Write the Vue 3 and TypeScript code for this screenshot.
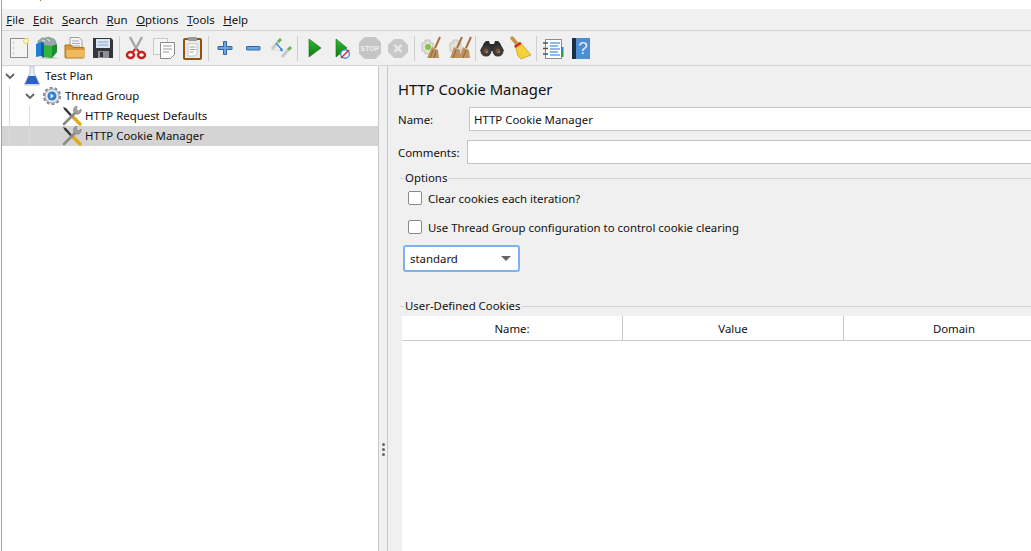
<template>
  <div class="app">
    <div class="titlebar"><span class="title-clip"></span></div>

    <nav class="menubar">
      <span v-for="m in menus" :key="m" class="menu"><u>{{ m[0] }}</u>{{ m.slice(1) }}</span>
    </nav>

    <div class="toolbar">
      <!-- new -->
      <svg class="tool" viewBox="0 0 28 24">
        <rect x="5.500" y="2.500" width="17" height="19" fill="#f3f3f1" stroke="#8f8f8f" />
        <circle cx="21" cy="5" r="2.500" fill="#fff8b0" stroke="#e8d96a" />
        <path d="M8 7h1M8 12h1M8 17h1" stroke="#999" />
      </svg>
      <!-- templates -->
      <svg class="tool" viewBox="0 0 28 24">
        <path d="M5 5l4-3h4l2-1 6 2 2 3v7H5z" fill="#9aa6ad" stroke="#75828a" stroke-width=".6" />
        <path d="M9 4l3 1M14 3l3 2" stroke="#e4e8ea" />
        <path d="M3 8l5-2v14l-5 1z" fill="#1f7fd0" />
        <path d="M8 6l3 1v15l-3-2z" fill="#0f5ea8" />
        <path d="M11 9l8 1v12l-8-1z" fill="#2fb53a" />
        <path d="M19 10l5-2v8l-5 6z" fill="#1d8a2b" />
        <ellipse cx="16" cy="22" rx="9" ry="1" fill="#000" opacity=".15" />
      </svg>
      <!-- open -->
      <svg class="tool" viewBox="0 0 28 24">
        <path d="M9 1.500h9l3 3v10H9z" fill="#f4f4f4" stroke="#a0a0a0" />
        <path d="M11 5h7M11 7.500h8M11 10h8" stroke="#aaa" />
        <path d="M4 9h6l2 2.500h11v9.500a1 1 0 0 1-1 1H5a1 1 0 0 1-1-1z" fill="#d99a33" stroke="#a8761f" />
        <path d="M5 14h19l-1 7.500H6z" fill="#eeba5f" />
      </svg>
      <!-- save -->
      <svg class="tool" viewBox="0 0 28 24">
        <path d="M4 2h18l2 2v18H4z" fill="#33363a" />
        <rect x="7" y="3" width="14" height="9" fill="#dbe6f2" />
        <path d="M9 6h10M9 9h10" stroke="#86a7cc" />
        <rect x="9" y="15" width="11" height="7" fill="#8d9094" />
        <rect x="11" y="16" width="3" height="5" fill="#33363a" />
      </svg>
      <span class="sep"></span>
      <!-- cut -->
      <svg class="tool" viewBox="0 0 28 24">
        <path d="M8 1l7 13M20 1l-7 13" stroke="#a8a8a8" stroke-width="2.500" fill="none" />
        <ellipse cx="8.500" cy="19" rx="3.500" ry="3" fill="#fff" stroke="#c8201c" stroke-width="2.400" />
        <ellipse cx="19.500" cy="19" rx="3.500" ry="3" fill="#fff" stroke="#c8201c" stroke-width="2.400" />
        <path d="M11 16l2-3M17 16l-2-3" stroke="#c8201c" stroke-width="2" />
      </svg>
      <!-- copy -->
      <svg class="tool" viewBox="0 0 28 24">
        <rect x="3.500" y="2.500" width="14" height="16" fill="#f4f4f4" stroke="#c9c9c9" />
        <path d="M10.500 6.500h14v12l-4 4h-10z" fill="#fff" stroke="#8a8a8a" />
        <path d="M13 10h9M13 13h9M13 16h6" stroke="#999" />
      </svg>
      <!-- paste -->
      <svg class="tool" viewBox="0 0 28 24">
        <rect x="6" y="3" width="17" height="20" rx="1" fill="#e9e9e6" stroke="#8f5412" stroke-width="2" />
        <rect x="10" y="1" width="9" height="4" rx="1" fill="#9a9a9a" />
        <path d="M10 8h9v10l-3 2h-6z" fill="#fff" stroke="#aaa" stroke-width=".6" />
        <path d="M11.500 11h6M11.500 13.500h6M11.500 16h4" stroke="#999" />
      </svg>
      <span class="sep"></span>
      <!-- expand -->
      <svg class="tool" viewBox="0 0 28 24">
        <path d="M12.500 5.500h3v5h5.500v3h-5.500v5h-3v-5h-5.500v-3h5.500z" fill="#6da3d8" stroke="#2a68ab" />
      </svg>
      <!-- collapse -->
      <svg class="tool" viewBox="0 0 28 24">
        <rect x="7.500" y="10.500" width="13.500" height="3.500" rx=".5" fill="#6da3d8" stroke="#2a68ab" />
      </svg>
      <!-- toggle -->
      <svg class="tool" viewBox="0 0 28 24">
        <path d="M5 13l6-7" stroke="#c9c9c9" stroke-width="3" />
        <path d="M11 6l3-3" stroke="#6fb05c" stroke-width="3" />
        <path d="M15 21l6-7" stroke="#c9c9c9" stroke-width="3" />
        <path d="M21 14l3-3" stroke="#6fb05c" stroke-width="3" />
        <path d="M4 14h7" stroke="#d5d5d5" />
        <path d="M9 7l6 7" stroke="#2f86dc" stroke-width="1.200" />
        <path d="M16 15.500l-3.500-1 2.500-2.500z" fill="#2f86dc" />
      </svg>
      <span class="sep"></span>
      <!-- start -->
      <svg class="tool" viewBox="0 0 28 24">
        <defs>
          <linearGradient id="run" x1="0" y1="0" x2="0" y2="1">
            <stop offset="0" stop-color="#35b935" />
            <stop offset="1" stop-color="#0a7d0a" />
          </linearGradient>
        </defs>
        <path d="M9 3l12 9-12 9z" fill="url(#run)" stroke="#0a6e0a" stroke-width=".6" />
      </svg>
      <!-- start no pauses -->
      <svg class="tool" viewBox="0 0 28 24">
        <path d="M8 3l11 9-11 9z" fill="url(#run)" stroke="#0a6e0a" stroke-width=".6" />
        <circle cx="17" cy="18" r="4.300" fill="#fff" stroke="#3d8fdc" stroke-width="1.400" />
        <path d="M13 22l8-8" stroke="#e0242a" stroke-width="1.400" />
      </svg>
      <!-- stop -->
      <svg class="tool" viewBox="0 0 28 24">
        <path d="M8.500 1h11L25 6.500v11L19.500 23h-11L3 17.500v-11z" fill="#c5c5c5" />
        <text x="14" y="15" class="stop-text">STOP</text>
      </svg>
      <!-- shutdown -->
      <svg class="tool" viewBox="0 0 28 24">
        <path d="M10 3h8l6 6v7l-6 6h-8l-6-6V9z" fill="#c8c8c8" />
        <path d="M10.500 9l7 7M17.500 9l-7 7" stroke="#e9e9e9" stroke-width="2.400" />
      </svg>
      <span class="sep"></span>
      <!-- clear -->
      <svg class="tool" viewBox="0 0 28 24">
        <path d="M5 7h3V4h5v3h3v8h-3v3H8v-3H5z" fill="#e2e2dc" stroke="#c2c2ba" />
        <circle cx="11" cy="11" r="3" fill="#86c440" />
        <path d="M23 1l-5 11" stroke="#a5703a" stroke-width="2" />
        <path d="M15 11l6 3 1 8H10z" fill="#bf9361" />
        <path d="M16 14l-3 8M19 15l-2 7" stroke="#8f6636" />
      </svg>
      <!-- clear all -->
      <svg class="tool" viewBox="0 0 28 24">
        <path d="M5 7h3V4h5v3h3v8h-3v3H8v-3H5z" fill="#e2e2dc" stroke="#c2c2ba" />
        <path d="M17 1l-5 11M26 1l-5 11" stroke="#a5703a" stroke-width="2" />
        <path d="M9 11l6 3 1 8H5z" fill="#bf9361" />
        <path d="M18 11l6 3 1 8H14z" fill="#bf9361" />
        <path d="M11 14l-3 8M21 14l-3 8" stroke="#8f6636" />
      </svg>
      <span class="sep"></span>
      <!-- search -->
      <svg class="tool" viewBox="0 0 28 24">
        <path d="M6 7l2-2h3l1 3h4l1-3h3l2 2 4 8H2z" fill="#2d2d2d" />
        <circle cx="8" cy="15" r="5.500" fill="#3a3a3a" />
        <circle cx="20" cy="15" r="5.500" fill="#3a3a3a" />
        <circle cx="8" cy="15" r="2.500" fill="#6e5444" />
        <circle cx="20" cy="15" r="2.500" fill="#6e5444" />
        <circle cx="9" cy="16" r="1" fill="#c9813f" />
        <circle cx="21" cy="16" r="1" fill="#c9813f" />
      </svg>
      <!-- reset search -->
      <svg class="tool" viewBox="0 0 28 24">
        <path d="M6 2l6 7" stroke="#c9913f" stroke-width="3.500" stroke-linecap="round" />
        <path d="M9 9l5-3 11 13-10 4-3-3z" fill="#f3d33b" stroke="#c8a420" stroke-width=".8" />
        <path d="M8 10l6-4 1.500 2-6 4z" fill="#d9242a" />
      </svg>
      <span class="sep"></span>
      <!-- function helper -->
      <svg class="tool" viewBox="0 0 28 24">
        <rect x="6.500" y="3.500" width="16" height="19" fill="#fff" stroke="#8d8d8d" />
        <path d="M4 7h5M4 12.500h5M4 18h5" stroke="#555" stroke-width="1.500" />
        <path d="M11 7h10M11 10h8M11 13h10M11 16h8M11 19h10" stroke="#1f75d6" stroke-width="1.200" />
        <rect x="22" y="11" width="2.500" height="5" fill="#2f86dc" />
        <rect x="22" y="16" width="2.500" height="5" fill="#2fa33a" />
      </svg>
      <!-- help -->
      <svg class="tool" viewBox="0 0 28 24">
        <path d="M5 2h18v21H5z" fill="#4c8ed6" />
        <path d="M5 2h4v21H5z" fill="#1b2e45" />
        <text x="16" y="18" class="help-text">?</text>
      </svg>
    </div>

    <main class="split">
      <section class="tree">
        <div v-for="node in nodes" :key="node.label" class="row" :class="{ selected: node.selected }">
          <span v-for="g in node.level" :key="g" class="guide"></span>
          <span class="chevron">
            <svg v-if="node.open" width="10" height="7" viewBox="0 0 10 7">
              <path d="M1 1l4 4 4-4" fill="none" stroke="#606060" stroke-width="1.800" />
            </svg>
          </span>
          <span class="node-icon">
            <svg v-if="node.kind === 'plan'" width="18" height="20" viewBox="0 0 18 20">
              <path d="M7 0h4v7l5 10a1 1 0 0 1-1 2H3a1 1 0 0 1-1-2l5-10z" fill="#e8eef6" stroke="#9aa9bb" stroke-width=".7" />
              <path d="M5.500 10h7l3.500 8H2z" fill="#2a62c9" />
            </svg>
            <svg v-else-if="node.kind === 'group'" width="20" height="20" viewBox="0 0 20 20">
              <circle cx="10" cy="10" r="8" fill="none" stroke="#8c929b" stroke-width="2.500" stroke-dasharray="3 2" />
              <circle cx="10" cy="10" r="7" fill="#e6e9ee" stroke="#9aa0a8" />
              <circle cx="10" cy="10" r="4.500" fill="#2f7fd2" />
              <path d="M8.500 7.500l3.500 2.500-3.500 2.500z" fill="#e6f0fb" />
            </svg>
            <svg v-else width="20" height="20" viewBox="0 0 20 20">
              <path d="M1 1l3 1 7 8-1.500 1.500-7-7.500z" fill="#333" />
              <path d="M11 11l7 7" stroke="#e0ac1c" stroke-width="3.400" stroke-linecap="round" />
              <path d="M2 18L14 6" stroke="#8b8b8b" stroke-width="2.800" stroke-linecap="round" />
              <path d="M15 0a4 4 0 0 0-3 6l2 2a4 4 0 0 0 5-5l-2.500 2-2-1z" fill="#a3a3a3" stroke="#666" stroke-width=".5" />
            </svg>
          </span>
          <span class="node-label">{{ node.label }}</span>
        </div>
      </section>

      <div class="divider">
        <span class="grip"></span>
        <span class="grip"></span>
        <span class="grip"></span>
      </div>

      <section class="editor">
        <h1 class="title">HTTP Cookie Manager</h1>

        <div class="field name-field">
          <label>Name:</label>
          <div class="input">HTTP Cookie Manager</div>
        </div>
        <div class="field comments-field">
          <label>Comments:</label>
          <div class="input"></div>
        </div>

        <fieldset class="group options">
          <legend>Options</legend>
          <label class="check first"><span class="box"></span>Clear cookies each iteration?</label>
          <label class="check second"><span class="box"></span>Use Thread Group configuration to control cookie clearing</label>
          <div class="select">
            <span>standard</span>
            <svg width="10" height="5" viewBox="0 0 10 5"><path d="M0 0h10L5 5z" fill="#666" /></svg>
          </div>
        </fieldset>

        <fieldset class="group cookies">
          <legend>User-Defined Cookies</legend>
          <div class="table">
            <div class="thead">
              <div v-for="c in columns" :key="c" class="th">{{ c }}</div>
            </div>
          </div>
        </fieldset>
      </section>
    </main>
  </div>
</template>

<script setup lang="ts">
type Node = { label: string; level: number; open: boolean; kind: string; selected?: boolean }

const menus = ['File', 'Edit', 'Search', 'Run', 'Options', 'Tools', 'Help']
const columns = ['Name:', 'Value', 'Domain']

const nodes: Node[] = [
  { label: 'Test Plan', level: 0, open: true, kind: 'plan' },
  { label: 'Thread Group', level: 1, open: true, kind: 'group' },
  { label: 'HTTP Request Defaults', level: 2, open: false, kind: 'tool' },
  { label: 'HTTP Cookie Manager', level: 2, open: false, kind: 'tool', selected: true },
]
</script>

<style>
html,
body {
  margin: 0;
  height: 100%;
  overflow: hidden;
  background: #fff;
}
</style>

<style scoped>
.app {
  display: flex;
  flex-direction: column;
  height: 551px;
  margin-left: 1px;
  overflow: hidden;
  border-left: 1px solid #a0a0a0;
  font-family: "Noto Sans", sans-serif;
  font-size: 11.4px;
  color: #111;
}

.titlebar {
  display: flex;
  height: 9px;
  background: #fff;
  flex: none;
}

.title-clip {
  width: 1px;
  height: 1px;
  margin-left: 38px;
  background: #b5651d;
}

.menubar {
  flex: none;
  display: flex;
  align-items: center;
  height: 21px;
  background: #f0f0f0;
  border-bottom: 1px solid #d4d4d4;
}

.menu {
  padding: 0 4.25px 1px;
}

.toolbar {
  flex: none;
  display: flex;
  align-items: center;
  height: 34px;
  padding-left: 3px;
  background: #f0f0f0;
  border-bottom: 1px solid #d4d4d4;
}

.tool {
  flex: none;
  width: 28px;
  height: 24px;
}

.sep {
  flex: none;
  width: 1px;
  height: 25px;
  margin: 0 2px;
  background: #cfcfcf;
}

.stop-text {
  font-family: "Liberation Sans", sans-serif;
  font-size: 7px;
  font-weight: 700;
  fill: #eee;
  text-anchor: middle;
}

.help-text {
  font-family: "Liberation Sans", sans-serif;
  font-size: 17px;
  fill: #e4eefa;
  text-anchor: middle;
}

.split {
  flex: 1;
  display: flex;
  min-height: 0;
}

.tree {
  flex: none;
  width: 376px;
  background: #fff;
  border-right: 1px solid #c8c8c8;
}

.row {
  display: flex;
  align-items: center;
  height: 20px;
}

.row.selected {
  background: #d4d4d4;
}

.guide {
  flex: none;
  width: 20px;
  height: 20px;
  background: linear-gradient(#dcdcdc, #dcdcdc) 7px 0 / 1px 100% no-repeat;
}

.chevron {
  flex: none;
  display: flex;
  justify-content: center;
  width: 20px;
  padding-right: 5px;
  box-sizing: border-box;
}

.node-icon {
  flex: none;
  display: flex;
  justify-content: center;
  width: 20px;
  height: 20px;
}

.node-label {
  margin-left: 3px;
  padding-bottom: 1px;
  white-space: nowrap;
}

.divider {
  flex: none;
  display: flex;
  flex-direction: column;
  align-items: center;
  justify-content: center;
  gap: 2px;
  width: 8px;
  padding-top: 282px;
  box-sizing: content-box;
  background: #f0f0f0;
  border-right: 1px solid #c8c8c8;
}

.grip {
  width: 3px;
  height: 3px;
  border-radius: 50%;
  background: #666;
}

.editor {
  flex: 1;
  min-width: 0;
  overflow: hidden;
  background: #f0f0f0;
  padding: 0 0 0 10px;
}

.title {
  margin: 12px 0 0;
  height: 22px;
  font-size: 14.8px;
  line-height: 22px;
  font-weight: 400;
}

.field {
  display: flex;
  align-items: center;
}

.field label {
  flex: none;
  white-space: nowrap;
}

.name-field {
  margin-top: 7px;
}

.name-field label {
  width: 71px;
}

.comments-field {
  margin-top: 9px;
}

.comments-field label {
  width: 69px;
}

.input {
  flex: 1;
  height: 22px;
  padding-left: 4px;
  line-height: 23px;
  background: #fff;
  border: 1px solid #c4c4c4;
  border-right: 0;
}

.group {
  margin: 0;
  padding: 0;
  border: 0;
  border-top: 1px solid #d4d4d4;
  min-width: 0;
}

.group legend {
  margin-left: 4px;
  padding: 0 1px;
  line-height: 16px;
}

.options {
  margin-top: 6px;
  margin-left: 2px;
  height: 127px;
}

.check {
  display: flex;
  align-items: center;
  gap: 6px;
  margin-left: 8px;
  height: 16px;
}

.check.first {
  margin-top: 4px;
}

.check.second {
  margin-top: 13px;
}

.box {
  width: 12px;
  height: 12px;
  background: #fff;
  border: 1px solid #8a8a8a;
  border-radius: 2px;
}

.select {
  display: flex;
  align-items: center;
  justify-content: space-between;
  box-sizing: border-box;
  width: 117px;
  height: 27px;
  margin: 10px 0 0 3px;
  padding: 0 7px 0 5px;
  background: #fff;
  border: 2px solid #7fb2ec;
  border-radius: 3px;
}

.cookies {
  margin-left: 2px;
}

.table {
  width: 663px;
  height: 300px;
  margin-left: 2px;
  margin-top: 2px;
  background: #fff;
}

.thead {
  display: flex;
  height: 25px;
  border-bottom: 1px solid #c8c8c8;
  box-sizing: border-box;
}

.th {
  flex: 1;
  display: flex;
  align-items: center;
  justify-content: center;
  border-right: 1px solid #c8c8c8;
}
</style>
